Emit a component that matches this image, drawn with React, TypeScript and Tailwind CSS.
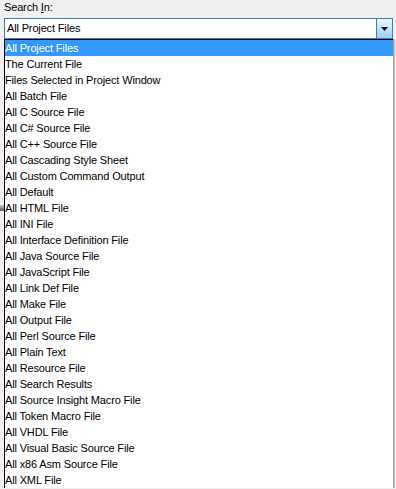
import React from "react";

const items = [
  "All Project Files",
  "The Current File",
  "Files Selected in Project Window",
  "All Batch File",
  "All C Source File",
  "All C# Source File",
  "All C++ Source File",
  "All Cascading Style Sheet",
  "All Custom Command Output",
  "All Default",
  "All HTML File",
  "All INI File",
  "All Interface Definition File",
  "All Java Source File",
  "All JavaScript File",
  "All Link Def File",
  "All Make File",
  "All Output File",
  "All Perl Source File",
  "All Plain Text",
  "All Resource File",
  "All Search Results",
  "All Source Insight Macro File",
  "All Token Macro File",
  "All VHDL File",
  "All Visual Basic Source File",
  "All x86 Asm Source File",
  "All XML File",
];

export default function App() {
  return (
    <div
      className="w-[396px] h-[489px] bg-[#f0f0f0] overflow-hidden text-[11px] tracking-[-0.15px] text-black"
      style={{ fontFamily: "Tahoma, 'Liberation Sans', Arial, sans-serif" }}
    >
      <div className="h-[18px] pl-[4px] pt-[1px] leading-[13px]">
        Search <span className="underline">I</span>n:
      </div>
      <div className="ml-[4px] w-[389px] h-[21px] bg-white border border-[#3c7fb1] flex items-stretch">
        <div className="flex-1 pl-[2px] flex items-center leading-[13px]">All Project Files</div>
        <div className="w-[16px] border-l border-[#3c7fb1] bg-gradient-to-b from-[#eaf6fd] via-[#c4e5f6] to-[#98d1ef] flex items-center justify-center">
          <svg width="7" height="4" viewBox="0 0 7 4">
            <polygon points="0,0 7,0 3.5,4" fill="#000" />
          </svg>
        </div>
      </div>
      <div className="flex">
        <div className="w-[4px] h-[449px] flex flex-col">
          <div className="h-[166px]" />
          <div className="h-[6px] bg-gradient-to-b from-[#b8c8d8] to-[#606060]" />
          <div className="h-[118px]" />
        </div>
        <div className="w-[389px] h-[449px] bg-white border-l border-t border-black flex flex-col">
          {items.map((t, i) => (
            <div
              key={t}
              className={
                "h-[16px] shrink-0 pl-0 leading-[16px] whitespace-nowrap " +
                (i === 0 ? "bg-[#3399ff] text-white" : "")
              }
            >
              {t}
            </div>
          ))}
        </div>
        <div className="w-[3px] h-[449px] flex">
          <div className="w-[1px] bg-[#a0a0a0]" />
          <div className="w-[1px] bg-[#c8c8c8]" />
          <div className="w-[1px] bg-[#e4e4e4]" />
        </div>
      </div>
    </div>
  );
}
